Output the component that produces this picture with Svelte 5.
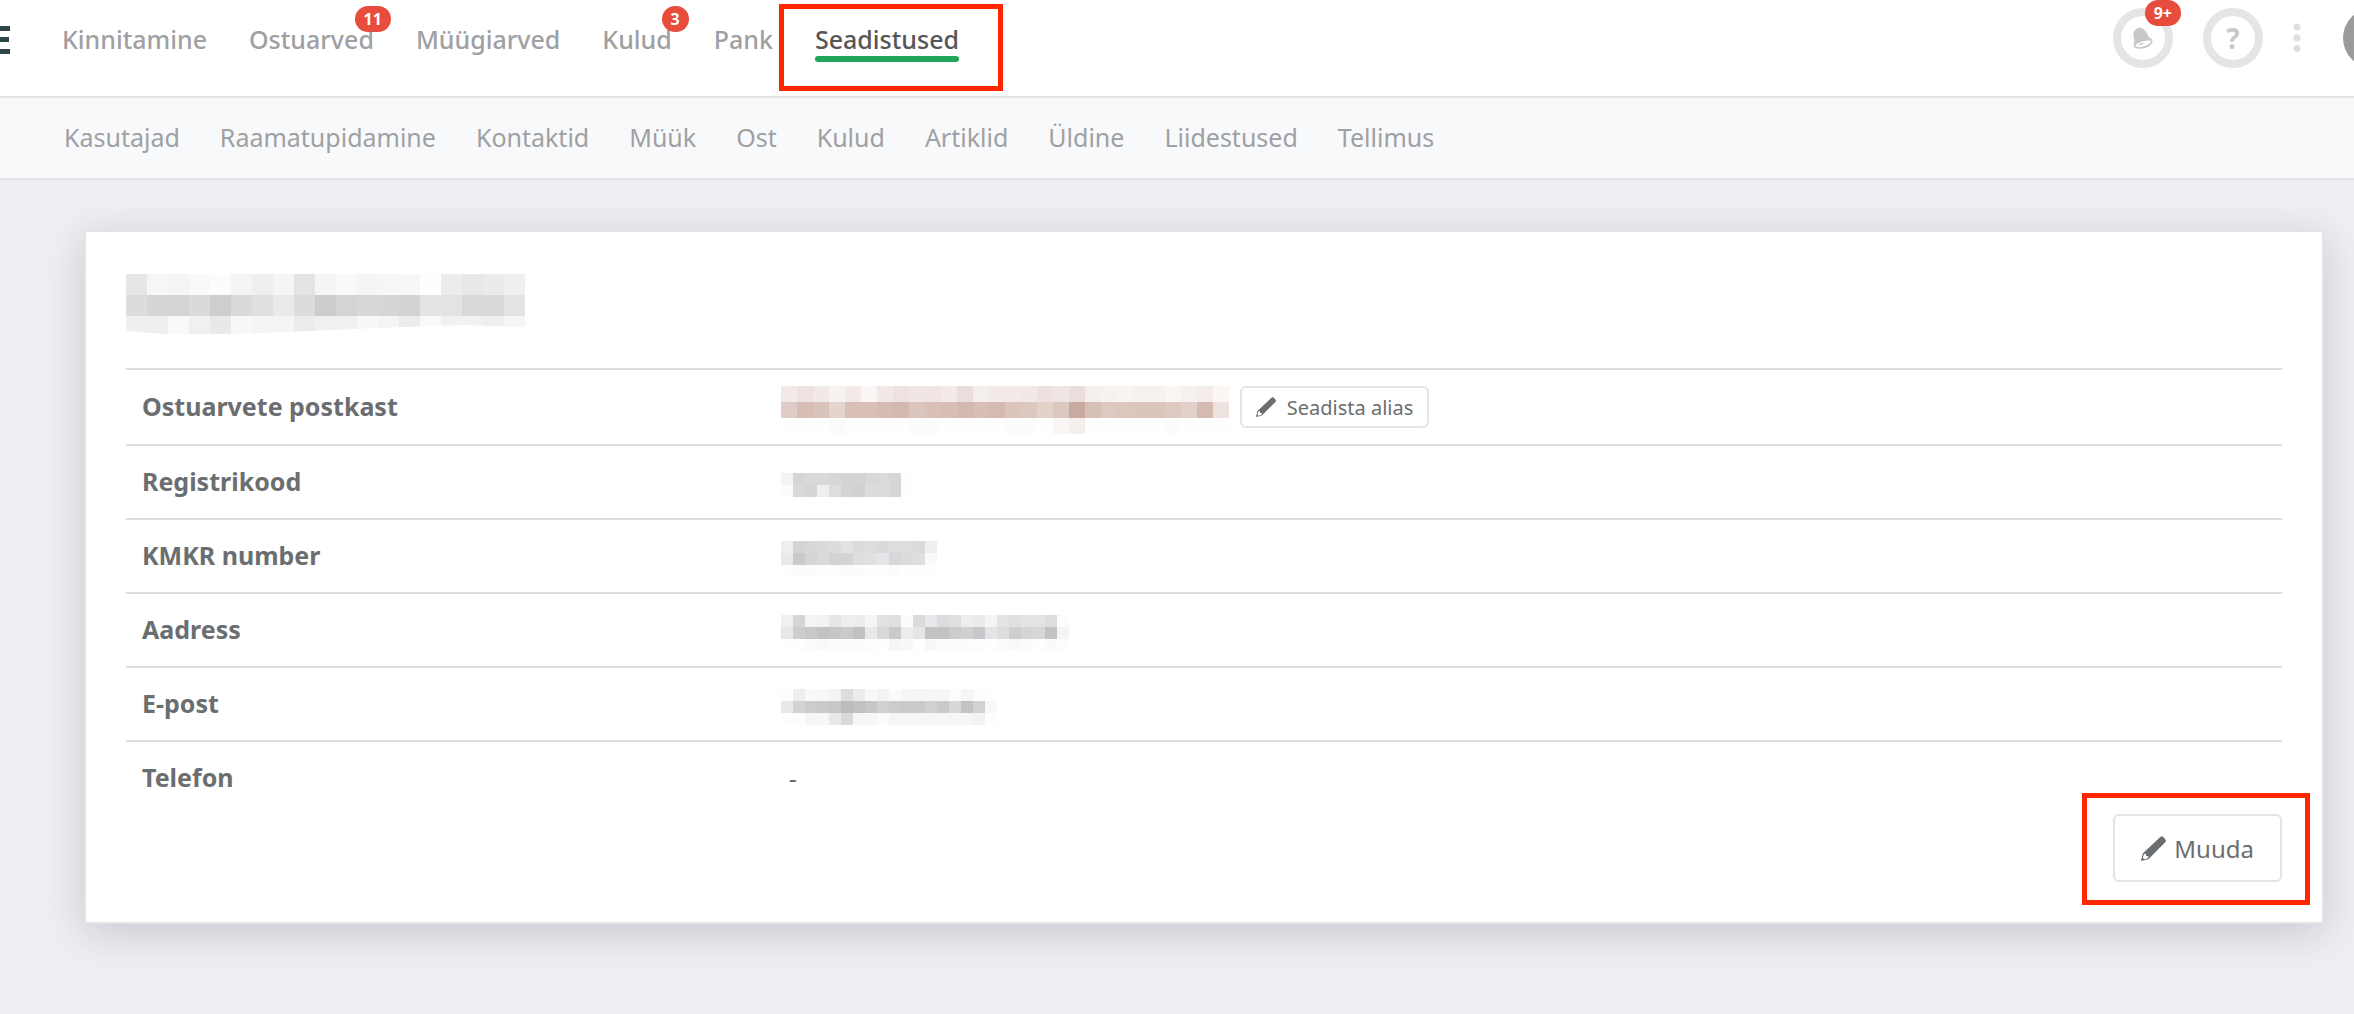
<script>
  const mainMenu = [
    { label: "Kinnitamine" },
    { label: "Ostuarved", badge: "11" },
    { label: "Müügiarved" },
    { label: "Kulud", badge: "3" },
    { label: "Pank" },
    { label: "Seadistused", active: true },
  ];

  const subMenu = [
    "Kasutajad",
    "Raamatupidamine",
    "Kontaktid",
    "Müük",
    "Ost",
    "Kulud",
    "Artiklid",
    "Üldine",
    "Liidestused",
    "Tellimus",
  ];

  // hidden values are drawn as a grid of coloured cells, one string per row
  const company = {
    cell: 21,
    rows: [
      "e5e7e6 f6f6f6 f3f5f4 f9f9f9 fcfcfc f5f5f5 efefef f5f5f5 e2e5e4 f5f5f5 f9f9f9 f4f6f5 f6f6f6 f7f7f7 fefefe ebedec e8e8e8 eaeceb efefef",
      "dbdddc d5d7d6 d3d4d6 d9dadc cdcecf d9dadc dedfe1 eaeaea dbdcde cbcccd d5d4d4 d7d8da d5d6d8 d2d3d5 e3e5e4 e3e3e3 dad9d9 d9dadc e3e3e3",
      "efefef efefef f9f9f9 eff1f0 e9e9e9 f8f8f8 f5f5f5 f5f5f5 ebedec f0f2f1 f0f2f1 f8f8f8 f5f5f5 ebedec f9f9f9 f0f2f1 f1f1f1 ecefed f5f7f6",
    ],
  };

  const mailbox = {
    cell: 16,
    rows: [
      "f3eae8 ede2df f0e9e6 f7f2ef f3e9e7 fbf6f5 f2e8e5 ede2df f0e6e3 f0e5e2 f4eae8 e9dedb f4efec f4ebe8 f4eae7 f2e9e6 ece1de efe5e3 e9dedb f5f0ed f7f2ef f9f4f1 f6f1ee f6f1ee faf6f4 f6f1ee f4ede9 faf7f5",
      "dfccc6 d6bdb5 d9c3bb e3d5cd d8bfb7 d8c0b9 d5bbb3 d4b9b1 dcc5be d9c1b9 d7beb6 d4b9b1 d7beb6 d5bab2 dbc5bd dcc8c0 e2d2ca ddc8c1 c8aaa0 d7c0b8 dec9c2 dcc6be dbc5bd dbc5bd decac3 e2d1ca d4bab1 eee2df",
      "fefefe fefefe fefefe fbfbfb fefefe fefefc fefefe fefefe fcfcfc fcfcfc fefefe fefefe fefefe fefefe fcfcfc fcfcfc fefefe fbf6f5 f6f0ed fefefe fefefe fefefe fefefe fefefe fcfcfc fefefe fefefe fefefe",
    ],
  };

  const details = [
    { label: "Ostuarvete postkast", mosaic: mailbox, alias: true },
    {
      label: "Registrikood",
      mosaic: {
        cell: 12,
        rows: [
          "f4f4f4 d4d6d5 d8dad9 d8d9db d5d6d8 d3d4d6 d2d3d3 d7d8da dadada d5d6d8 fdfdfd",
          "fafcfb d8d9db d5d6d8 efefef dddfde d3d4d6 d0d2d1 dbdddc dadcdb d5d6d8 fdfdfd",
        ],
      },
    },
    {
      label: "KMKR number",
      mosaic: {
        cell: 12,
        rows: [
          "eeeeee d2d3d5 d7d7d7 dadada dbdddc e3e3e3 dadcdb dcddde d9dadc dddddd dcdddc dadada eeeeee",
          "e8eae9 cacacb d4d6d5 dadada d3d3d2 d3d5d4 dddee0 e1e1e2 e5e6e9 d6d7d9 dbdcde dfdfdf f9f9f9",
          "fefefe fcfcfc fcfcfc fefefe fdfdfd fbfbfb fcfcfc fefefe fefefe fbfdfc fdfefe fdfefe fefefe",
        ],
      },
    },
    {
      label: "Aadress",
      mosaic: {
        cell: 12,
        rows: [
          "f0f0f0 d4d5d7 f4f4f4 f2f2f2 e5e7e6 eeeeee ecedec f4f6f5 e1e3e2 dee0df fcfcfc dbdbdb e7e8eb dcdcdc dfe1e0 ecedec ebebeb f5f5f5 e3e5e4 e0e0e0 e2e4e3 e3e3e3 dddddd fcfcfc",
          "e8e8e8 cccdcf c8c8c8 c2c3c5 c5c6c8 c9cacc c0c2c1 e7e9e8 d8d9db c9cacc ebedec e5e5e5 c2c3c5 c2c3c5 cbccce ced0d1 c7c8ca e3e4e7 dedede cecece d4d5d7 d6d7d9 c2c3c5 f4f4f4",
          "fefefe fefefe fbfbfb f9f9f9 fbfbfb fbfdfc fcfcfc fdfdfd fefefe f6f6f6 f8f8f8 fefefe f8f8f8 fcfcfc fcfcfc fcfcfc fdfdfd fefefe fbfbfb f9f9f9 fbfbfb fefefe fafafa fdfdfd",
        ],
      },
    },
    {
      label: "E-post",
      mosaic: {
        cell: 12,
        rows: [
          "fdfdfd eeeeee f9f9f9 f8f8f8 f3f5f4 dcdcdc ebebeb f7f9f8 f3f3f3 fbfbfb f6f6f6 f4f5f5 f6f6f6 f6f6f6 fcfcfc f6f6f6 fcfcfc fefefe",
          "e8e8e8 d1d3d2 cbcccd c9cbca c7c8ca bbbcbe c0c1c3 c5c6c8 cfd0d2 cbccce c9cacc c9cacc d0d2d1 c9cacc d8d8d8 c2c3c5 d1d2d4 f7f9f8",
          "fdfdfd fdfdfd f6f6f6 f7f7f7 e9e9e9 d9d9da f6f6f6 f7f7f7 fbfbfb f6f6f6 f5f7f6 f5f6f6 f6f6f6 f6f6f6 f5f7f6 f6f6f6 f1f3f2 fdfdfd",
        ],
      },
    },
    { label: "Telefon", value: "-" },
  ];
</script>

<svelte:head>
  <title>Seadistused</title>
</svelte:head>

{#snippet mosaicGrid(grid)}
  {@const columns = grid.rows[0].split(" ").length}
  <svg
    class="mosaic"
    width={columns * grid.cell}
    height={grid.rows.length * grid.cell}
    shape-rendering="crispEdges"
    aria-hidden="true"
  >
    {#each grid.rows as row, y}
      {#each row.split(" ") as color, x}
        <rect
          x={x * grid.cell}
          y={y * grid.cell}
          width={grid.cell}
          height={grid.cell}
          fill={`#${color}`}
        />
      {/each}
    {/each}
  </svg>
{/snippet}

{#snippet pencil(size)}
  <svg class="pencil" width={size} height={size} viewBox="0 0 25 25" aria-hidden="true">
    <path
      fill="currentColor"
      fill-rule="evenodd"
      d="M19 1.2Q20.6-.4 22.3 1L24 2.9Q25.700 4.600 24.200 6.200L8.400 22.200Q7.600 23.200 6.400 23.500L0 25L1.400 18.700Q1.600 17.700 2.500 16.800ZM2.600 18.900L1.900 22L3.300 23.300L6.200 22.500Q7.600 21.700 7.300 20.200L5.200 19.900L4.800 17.800Q3.400 17.600 2.600 18.900Z"
    />
  </svg>
{/snippet}

<header>
  <div class="topbar">
    <a class="logo" href="#home" aria-label="Avaleht">
      <svg width="11" height="28" viewBox="0 0 11 28">
        <path d="M0 0h10v5H0zM0 11h9v5H0zM0 23h10v5H0z" fill="#2f4648" />
      </svg>
    </a>
    <nav class="main-menu">
      {#each mainMenu as item}
        <a href="#{item.label}" class:active={item.active}>
          {item.label}
          {#if item.badge}
            <span class="badge">{item.badge}</span>
          {/if}
          {#if item.active}
            <span class="highlight"></span>
          {/if}
        </a>
      {/each}
    </nav>
    <div class="tools">
      <button class="round" aria-label="Teavitused">
        <svg width="20" height="22" viewBox="0 0 20 22">
          <path
            fill="#c8c8c8"
            fill-rule="evenodd"
            d="M1.500 3.500Q3 1 5.500.9Q6.500-.4 7.600 1Q12.500 2.300 14.300 7Q15.300 10.500 18.800 12.200Q20.600 14.500 18 17.500Q14 21.800 6 21.800Q.2 21.500 .6 17.800Q1.800 14 .6 9.500Q.2 6 1.500 3.500ZM2.200 18.600Q3 20.600 8 20Q14.500 19 17.600 15.600Q18.400 13.600 16.300 13.500Q10.500 13 5.200 16Q2.400 17.500 2.200 18.600ZM5 18.300Q7.200 15.600 11 15.700Q10 18.300 5 18.300Z"
          />
        </svg>
        <span class="badge">9+</span>
      </button>
      <button class="round help" aria-label="Abi">?</button>
      <button class="more" aria-label="Rohkem">
        <svg width="8" height="30" viewBox="0 0 8 30" fill="#dedede">
          <circle cx="4" cy="4" r="3.500" />
          <circle cx="4" cy="15" r="3.500" />
          <circle cx="4" cy="25.500" r="3.500" />
        </svg>
      </button>
      <button class="avatar" aria-label="Minu konto"></button>
    </div>
  </div>
  <nav class="sub-menu">
    {#each subMenu as item}
      <a href="#{item}">{item}</a>
    {/each}
  </nav>
</header>

<main>
  <div class="company">
    {@render mosaicGrid(company)}
  </div>
  <table>
    <tbody>
      {#each details as row}
        <tr>
          <th scope="row">{row.label}</th>
          <td>
            <div class="value">
              {#if row.mosaic}
                {@render mosaicGrid(row.mosaic)}
              {:else}
                {row.value}
              {/if}
              {#if row.alias}
                <button class="btn btn-small">
                  {@render pencil(20)}
                  Seadista alias
                </button>
              {/if}
            </div>
          </td>
        </tr>
      {/each}
    </tbody>
  </table>
  <div class="actions">
    <button class="btn">
      {@render pencil(25)}
      Muuda
      <span class="highlight"></span>
    </button>
  </div>
</main>

<style>
  :global(body) {
    background-color: #eeeff5;
    overflow-x: hidden;
  }

  header,
  main,
  button {
    font-family: "Noto Sans", "Open Sans", sans-serif;
    font-size: 25px;
    color: #6b6e70;
  }

  a {
    color: #9fa0a3;
    text-decoration: none;
  }

  button {
    background: none;
    border: none;
    padding: 0;
    cursor: pointer;
  }

  svg {
    display: block;
    flex: none;
  }

  .topbar {
    display: flex;
    height: 88px;
    padding-top: 8px;
    background-color: #fff;
    border-bottom: 2px solid #e3e4e6;
    overflow: hidden;
  }

  .logo {
    width: 62px;
    padding-top: 18px;
  }

  .main-menu {
    display: flex;
    gap: 42px;
    line-height: 62px;
    font-weight: 500;
  }

  .main-menu a {
    position: relative;
  }

  .main-menu .active {
    color: #555658;
  }

  .active::after {
    content: "";
    position: absolute;
    left: 0;
    right: 0;
    top: 48px;
    height: 6px;
    border-radius: 3px;
    background-color: #20a659;
  }

  .badge {
    position: absolute;
    top: -2px;
    right: -17px;
    padding: 0 9px;
    border-radius: 13px;
    background-color: #e74c3c;
    color: #fff;
    font-size: 16px;
    font-weight: 700;
    line-height: 26px;
  }

  .highlight {
    position: absolute;
    border: 5px solid #ff2600;
    pointer-events: none;
  }

  .main-menu .highlight {
    top: -4px;
    right: -44px;
    left: -36px;
    height: 77px;
  }

  .tools {
    display: flex;
    align-items: flex-start;
    margin-left: auto;
    margin-right: -49px;
  }

  .round {
    position: relative;
    display: flex;
    align-items: center;
    justify-content: center;
    box-sizing: border-box;
    width: 60px;
    height: 60px;
    margin-right: 30px;
    border: 8px solid #e5e5e5;
    border-radius: 50%;
  }

  .round .badge {
    top: -16px;
    right: -16px;
  }

  .help {
    color: #c8c8c8;
    font-size: 28px;
    font-weight: 700;
  }

  .more {
    width: 8px;
    height: 60px;
    margin-right: 42px;
  }

  .avatar {
    width: 60px;
    height: 60px;
    border-radius: 50%;
    background-color: #9b9b9b;
  }

  .sub-menu {
    display: flex;
    gap: 40px;
    padding: 0 64px 2px;
    line-height: 78px;
    background-color: #f8f9fb;
    border-bottom: 2px solid #e3e4e6;
  }

  main {
    margin: 50px 30px 90px 84px;
    padding: 40px;
    background-color: #fff;
    border: 2px solid #e3e4e6;
    border-radius: 3px;
    box-shadow: 0 9px 40px rgba(20, 30, 30, 0.19);
  }

  .company {
    height: 63px;
    padding-top: 2px;
    margin-bottom: 31px;
  }

  .company .mosaic {
    clip-path: polygon(0 0, 100% 0, 100% 53px, 85% 51px, 70% 53px, 27% 60px, 10% 60px, 0 57px);
  }

  table {
    width: 100%;
    border-collapse: separate;
    border-spacing: 0;
    table-layout: fixed;
  }

  th,
  td {
    padding: 16px;
    border-top: 2px solid #dcdcdd;
    line-height: 40px;
    text-align: left;
  }

  th {
    width: 30%;
    box-sizing: border-box;
    padding: 15px 16px 17px;
    font-weight: 700;
  }

  .value {
    display: flex;
    align-items: center;
    min-height: 40px;
  }

  .value .mosaic {
    margin: 0 0 -6px -8px;
  }

  .btn {
    position: relative;
    display: flex;
    align-items: center;
    gap: 8px;
    box-sizing: border-box;
    height: 68px;
    padding: 0 26px;
    border: 2px solid #e3e4e5;
    border-radius: 6px;
    background-color: #fff;
    font-size: 24px;
  }

  .btn-small {
    gap: 11px;
    height: 42px;
    margin-left: 11px;
    padding: 0 14px;
    font-size: 20px;
  }

  .actions {
    display: flex;
    justify-content: flex-end;
  }

  .actions .highlight {
    top: -23px;
    right: -30px;
    bottom: -25px;
    left: -33px;
  }
</style>
